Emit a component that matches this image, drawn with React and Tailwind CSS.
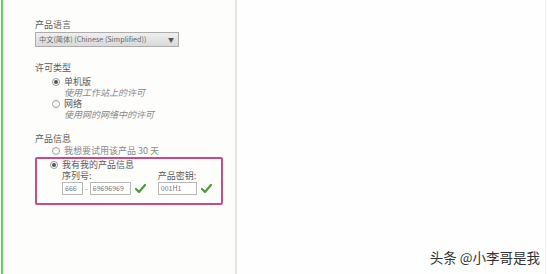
import React from 'react'

const Radio = ({ checked }) => (
  <span className="w-[8px] h-[8px] rounded-full border border-[#9a9a9a] bg-white flex items-center justify-center shrink-0">
    {checked && <span className="w-[4px] h-[4px] rounded-full bg-[#555]" />}
  </span>
)

const Check = () => (
  <svg width="11" height="9" viewBox="0 0 11 9" className="shrink-0">
    <path d="M1 5 L4 8 L10 1" fill="none" stroke="#4f9a3a" strokeWidth="2.2" strokeLinecap="round" strokeLinejoin="round" />
  </svg>
)

const Field = ({ value, w }) => (
  <div className={`${w} h-[13px] border border-[#b8b8b8] bg-white text-[7px] leading-[11px] text-[#777] pl-[2px] overflow-hidden whitespace-nowrap`}>{value}</div>
)

export default function App() {
  return (
    <div
      className="w-[548px] h-[274px] flex bg-[#fdfdfd] text-[#5a5a5a] relative overflow-hidden"
      style={{ fontFamily: '"Noto Sans CJK SC", "Noto Sans", sans-serif' }}
    >
      <div className="w-[1px] bg-[#f4fbf2]" />
      <div className="w-[2px] bg-[#5fd35a]" />
      <div className="w-[234px] border-r-2 border-[#e4e4e4] pl-[32px] pt-[18px] text-[9px] bg-[#fdfdfc]">
        <div className="leading-[13px]">产品语言</div>
        <div className="mt-[1px] w-[144px] h-[15px] border border-[#acacac] bg-gradient-to-b from-[#efefef] to-[#d9d9d9] flex items-center justify-between pl-[3px] pr-[4px] text-[7.2px] text-[#666] whitespace-nowrap">
          <span>中文(简体) (Chinese (Simplified))</span>
          <span className="text-[6px] text-[#555]">▼</span>
        </div>

        <div className="mt-[14px] leading-[13px]">许可类型</div>
        <div className="pl-[17px] mt-[2px]">
          <div className="flex items-center gap-[4px] leading-[11px]"><Radio checked /><span>单机版</span></div>
          <div className="pl-[12px] italic text-[#888] leading-[11px]">使用工作站上的许可</div>
          <div className="flex items-center gap-[4px] leading-[11px]"><Radio /><span>网络</span></div>
          <div className="pl-[12px] italic text-[#888] leading-[11px]">使用网的网络中的许可</div>
        </div>

        <div className="mt-[12px] leading-[13px]">产品信息</div>
        <div className="pl-[17px]">
          <div className="flex items-center gap-[4px] leading-[11px] text-[#888]"><Radio /><span>我想要试用该产品 30 天</span></div>
        </div>
        <div className="mt-[1px] w-[188px] border-2 border-[#cc4a82] rounded-[2px] pl-[13px] pb-[8px]">
          <div className="flex items-center gap-[4px] leading-[11px]"><Radio checked /><span>我有我的产品信息</span></div>
          <div className="pl-[12px] flex gap-[12px]">
            <div>
              <div className="leading-[11px]">序列号:</div>
              <div className="flex items-center mt-[1px]">
                <Field value="666" w="w-[21px]" />
                <span className="mx-[2px] text-[8px] leading-[11px] text-[#888]">-</span>
                <Field value="69696969" w="w-[41px]" />
                <span className="ml-[4px]"><Check /></span>
              </div>
            </div>
            <div>
              <div className="leading-[11px]">产品密钥:</div>
              <div className="flex items-center mt-[1px]">
                <Field value="001H1" w="w-[39px]" />
                <span className="ml-[4px]"><Check /></span>
              </div>
            </div>
          </div>
        </div>
      </div>
      <div className="flex-1 bg-[#fefefe]" />
      <div className="w-[1px] bg-[#eaf6e8]" />
      <div className="w-[2px] bg-[#fdfdfd]" />
      <div
        className="absolute right-[8px] bottom-[8px] text-[13.5px] text-[#333] leading-[17px]"
        style={{ textShadow: '0 0 2px #fff, 1px 1px 0 #fff' }}
      >
        头条 @小李哥是我
      </div>
    </div>
  )
}
